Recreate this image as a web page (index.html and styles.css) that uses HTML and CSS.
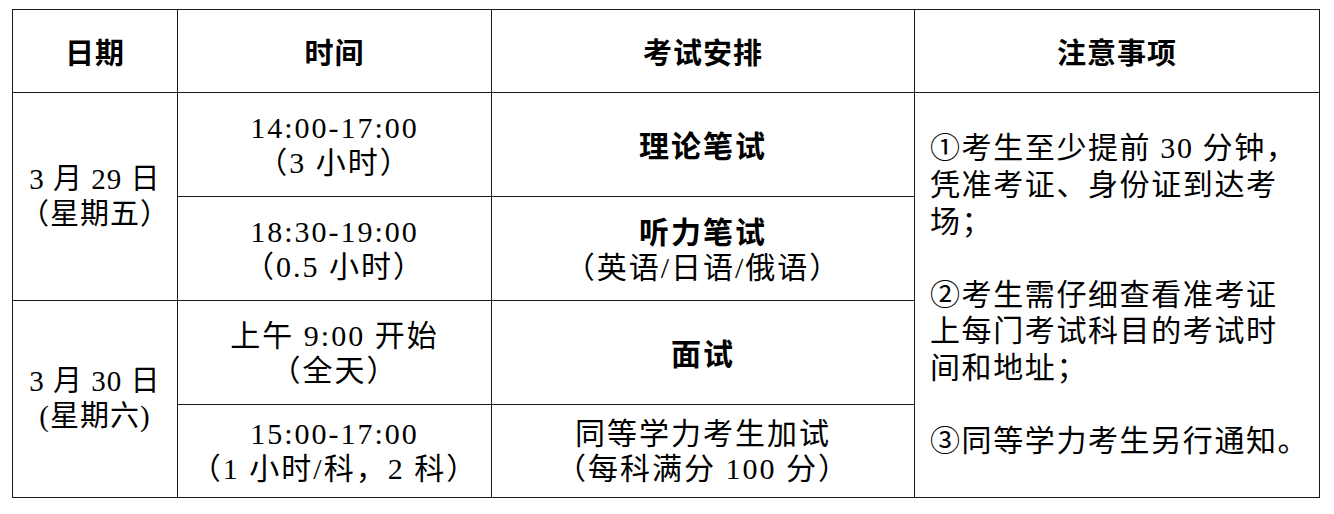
FILE: index.html
```html
<!DOCTYPE html>
<html lang="zh-CN">
<head>
<meta charset="utf-8">
<title>考试安排</title>
<link rel="stylesheet" href="styles.css">
</head>
<body>
<table class="schedule">
  <colgroup>
    <col class="c-date">
    <col class="c-time">
    <col class="c-exam">
    <col class="c-note">
  </colgroup>
  <thead>
    <tr class="head">
      <th>日期</th>
      <th>时间</th>
      <th>考试安排</th>
      <th>注意事项</th>
    </tr>
  </thead>
  <tbody>
    <tr class="row">
      <td rowspan="2" class="date">3 月 29 日<br>（星期五）</td>
      <td>14:00-17:00<br>（3 小时）</td>
      <td class="strong">理论笔试</td>
      <td rowspan="4" class="notes">①考生至少提前 30 分钟，<br>凭准考证、身份证到达考<br>场；<br><br>②考生需仔细查看准考证<br>上每门考试科目的考试时<br>间和地址；<br><br>③同等学力考生另行通知。</td>
    </tr>
    <tr class="row">
      <td>18:30-19:00<br>（0.5 小时）</td>
      <td><span class="strong">听力笔试</span><br>（英语/日语/俄语）</td>
    </tr>
    <tr class="row">
      <td rowspan="2" class="date">3 月 30 日<br>(星期六)</td>
      <td>上午 9:00 开始<br>（全天）</td>
      <td class="strong">面试</td>
    </tr>
    <tr class="row last">
      <td>15:00-17:00<br>（1 小时/科，2 科）</td>
      <td>同等学力考生加试<br>（每科满分 100 分）</td>
    </tr>
  </tbody>
</table>
</body>
</html>
```
FILE: styles.css
```css
html, body {
  margin: 0;
  padding: 0;
  background: #fff;
}

body {
  padding: 9px 0 0 12px;
  font-family: "Liberation Serif", "Noto Sans CJK SC", serif;
  color: #000;
}

.schedule {
  border-collapse: collapse;
  table-layout: fixed;
  width: 1307px;
}

.c-date { width: 165px; }
.c-time { width: 314px; }
.c-exam { width: 423px; }
.c-note { width: 405px; }

.schedule th,
.schedule td {
  border: 1px solid #1a1a1a;
  padding: 0;
  text-align: center;
  vertical-align: middle;
  line-height: 35px;
  white-space: nowrap;
}

.schedule td {
  font-size: 30px;
  letter-spacing: 2px;
}

.schedule th {
  font-family: "Noto Sans CJK SC", sans-serif;
  font-weight: 700;
  font-size: 29px;
  letter-spacing: 1px;
}

.schedule td:nth-child(2),
.schedule th:nth-child(3),
.schedule th:nth-child(4) {
  border-left-color: #6a6a6a;
}

.head { height: 83px; }
.row { height: 104px; }
.row.last { height: 93px; }

.schedule .date {
  font-size: 29px;
  letter-spacing: 1px;
}

.strong {
  font-family: "Noto Sans CJK SC", sans-serif;
  font-weight: 700;
  letter-spacing: 2px;
}

.schedule .notes {
  text-align: left;
  padding-left: 15px;
  line-height: 36.6px;
  letter-spacing: 1.6px;
}
```
